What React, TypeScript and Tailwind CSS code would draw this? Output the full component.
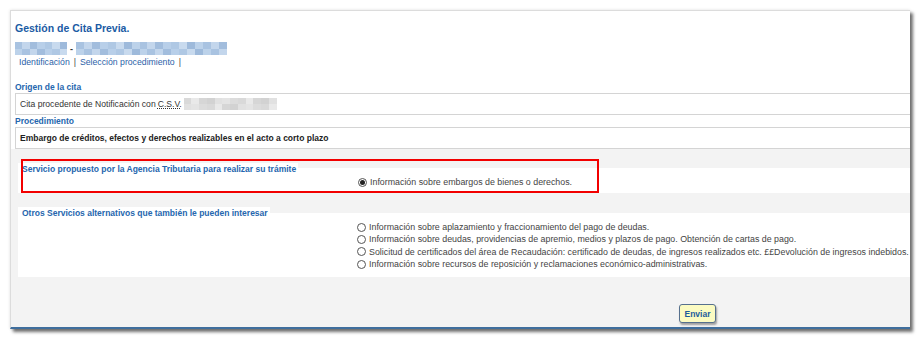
const blueShades = ["#a9c3e1", "#b8cfe9", "#9ebadb", "#c3d6ec", "#afc8e4", "#bcd2ea", "#a2bddd", "#c8daee"];
const grayShades = ["#d9d9d9", "#e4e4e4", "#d2d2d2", "#e9e9e9", "#dcdcdc", "#e1e1e1", "#d6d6d6"];

function Mosaic({ width, cells, shades, height }: { width: number; cells: number; shades: string[]; height: number }) {
  const w = width / cells;
  return (
    <span className="inline-flex flex-col blur-[0.5px]" style={{ width, height }}>
      {[0, 1].map((row) => (
        <span key={row} className="flex flex-1">
          {Array.from({ length: cells }).map((_, i) => (
            <span key={i} style={{ width: w, background: shades[(i * 3 + row * 5) % shades.length] }} />
          ))}
        </span>
      ))}
    </span>
  );
}

function Radio({ checked }: { checked?: boolean }) {
  return (
    <span className="mr-[3px] inline-flex h-[9px] w-[9px] shrink-0 items-center justify-center rounded-full border border-[#555] bg-white">
      {checked && <span className="h-[5px] w-[5px] rounded-full bg-[#222]" />}
    </span>
  );
}

function Option({ text, checked }: { text: string; checked?: boolean }) {
  return (
    <div className="flex h-[12.3px] items-center whitespace-nowrap text-[8.85px] leading-[12px] text-[#444]">
      <Radio checked={checked} />
      {text}
    </div>
  );
}

const others = [
  "Información sobre aplazamiento y fraccionamiento del pago de deudas.",
  "Información sobre deudas, providencias de apremio, medios y plazos de pago. Obtención de cartas de pago.",
  "Solicitud de certificados del área de Recaudación: certificado de deudas, de ingresos realizados etc. ££Devolución de ingresos indebidos.",
  "Información sobre recursos de reposición y reclamaciones económico-administrativas.",
];

export default function App() {
  return (
    <div className="h-[342px] w-[921px] overflow-hidden bg-white pl-[10px] pt-[10px] font-['Liberation_Sans',Arial,sans-serif] leading-[12px]">
      <div className="w-[900px] border-l border-t border-[#dcdcdc] border-b-2 border-b-[#3f6e9d] bg-white shadow-[3px_3px_3px_rgba(0,0,0,0.55),0_0_3px_rgba(0,0,0,0.12)]">
        {/* cabecera */}
        <div className="pl-[4px] pt-[11px]">
          <h1 className="text-[10.5px] font-bold leading-[13px] text-[#1b5ba4]">Gestión de Cita Previa.</h1>
          <div className="mt-[7px] flex h-[13px] items-center">
            <Mosaic width={52} cells={7} shades={blueShades} height={13} />
            <span className="mx-[3px] text-[9px] font-bold text-[#333]">-</span>
            <Mosaic width={151} cells={19} shades={blueShades} height={13} />
          </div>
          <div className="mt-[1px] flex items-center pl-[4px] text-[8.7px] leading-[12px] text-[#2b62a8]">
            <span>Identificación</span>
            <span className="mx-[4px] text-[#444]">|</span>
            <span>Selección procedimiento</span>
            <span className="ml-[4px] text-[#444]">|</span>
          </div>

          <div className="mt-[13px] text-[8.5px] font-bold leading-[12px] text-[#2566ae]">Origen de la cita</div>
          <div className="flex h-[22px] items-center border-y border-l border-[#d4d4d4] bg-white pl-[4px] text-[8.6px] text-[#333]">
            Cita procedente de Notificación con{" "}
            <abbr className="ml-[2px] mr-[2px] underline decoration-dotted">C.S.V.</abbr>
            <Mosaic width={93} cells={12} shades={grayShades} height={12} />
          </div>
          <div className="text-[8.5px] font-bold leading-[12px] text-[#2566ae]">Procedimiento</div>
          <div className="flex h-[22px] items-center border-y border-l border-[#d4d4d4] bg-white pl-[4px] text-[8.5px] font-bold text-[#222]">
            Embargo de créditos, efectos y derechos realizables en el acto a corto plazo
          </div>
        </div>

        {/* servicios */}
        <div className="bg-[#f3f3f3] pl-[7px] pt-[14px] pb-[4px]">
          <div className="relative">
            <div className="w-fit bg-white pl-[4px] pr-[2px] text-[8.5px] font-bold leading-[12px] text-[#2566ae]">
              Servicio propuesto por la Agencia Tributaria para realizar su trámite
            </div>
            <div className="-mt-[7px] h-[25px] bg-white pl-[340px] pt-[8px]">
              <Option checked text="Información sobre embargos de bienes o derechos." />
            </div>
            <div className="pointer-events-none absolute -top-[4px] left-[3px] h-[34px] w-[578px] border-2 border-[#f20000]" />
          </div>

          <div className="mt-[14px]">
            <div className="w-fit bg-white pl-[4px] pr-[2px] text-[8.5px] font-bold leading-[12px] text-[#2566ae]">
              Otros Servicios alternativos que también le pueden interesar
            </div>
            <div className="-mt-[6px] h-[64px] bg-white pl-[339px] pt-[8px]">
              {others.map((t) => (
                <Option key={t} text={t} />
              ))}
            </div>
          </div>

          <div className="mt-[27px] flex pl-[661px]">
            <button className="h-[19px] w-[37px] rounded-[3px] border border-[#56708e] bg-[#fbfbc2] text-[8.5px] font-bold text-[#1d5c9c] shadow-[1px_2px_2px_rgba(0,0,0,0.35)]">
              Enviar
            </button>
          </div>
        </div>
      </div>
    </div>
  );
}
